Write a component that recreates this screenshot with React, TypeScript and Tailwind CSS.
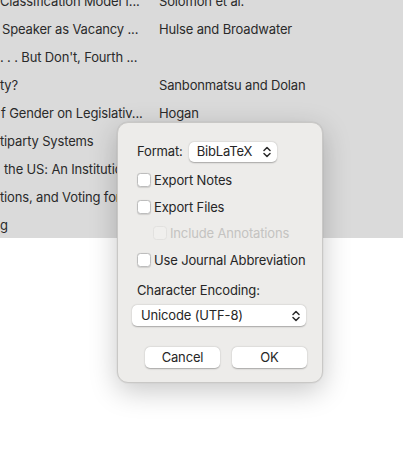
import React from 'react'

const rows = [
  { title: 'Classification Model f...', author: 'Solomon et al.', indent: 'ml-0' },
  { title: 'Speaker as Vacancy ...', author: 'Hulse and Broadwater', indent: 'ml-[2px]' },
  { title: '. . . But Don\'t, Fourth ...', author: '', indent: 'ml-0' },
  { title: 'ty?', author: 'Sanbonmatsu and Dolan', indent: 'ml-0' },
  { title: 'f Gender on Legislativ...', author: 'Hogan', indent: 'ml-[1px]' },
  { title: 'tiparty Systems', author: '', indent: 'ml-0' },
  { title: 'the US: An Institutional', author: '', indent: 'ml-[4px]' },
  { title: 'tions, and Voting for', author: '', indent: 'ml-0' },
  { title: 'g', author: '', indent: 'ml-0' },
]

const font = { fontFamily: 'Inter, "Noto Sans", sans-serif' }

function Chevrons() {
  return (
    <svg width="8" height="12" viewBox="0 0 8 12" fill="none" stroke="#2b2b2b" strokeWidth="1.5" strokeLinecap="round" strokeLinejoin="round">
      <path d="M1 4.5 L4 1.5 L7 4.5" />
      <path d="M1 7.5 L4 10.5 L7 7.5" />
    </svg>
  )
}

function Check({ label, disabled = false }: { label: string; disabled?: boolean }) {
  return (
    <div className="flex items-center gap-[3px] h-[14px]">
      <span
        className={`w-[14px] h-[14px] rounded-[3.5px] border ${
          disabled ? 'border-[#e2e1df] bg-[#f0efed]' : 'border-[#bdbdbd] bg-white shadow-[0_0.5px_1px_rgba(0,0,0,0.12)]'
        }`}
      />
      <span className={`text-[13px] leading-none ${disabled ? 'text-[#c4c3c1]' : 'text-[#262626]'}`}>{label}</span>
    </div>
  )
}

export default function App() {
  return (
    <div className="relative w-[403px] h-[464px] bg-white overflow-hidden text-[#262626] tracking-[-0.15px]" style={font}>
      {/* library list behind the sheet */}
      <div className="h-[238px] bg-[#dadada] overflow-hidden">
        <div className="-mt-[12px]">
          {rows.map((r, i) => (
            <div key={i} className="flex items-center h-[28px] text-[13px] text-[#2a2a2a]">
              <div className="w-[159px] shrink-0 whitespace-nowrap overflow-hidden">
                <span className={`inline-block ${r.indent}`}>{r.title}</span>
              </div>
              <div className="whitespace-nowrap">{r.author}</div>
            </div>
          ))}
        </div>
      </div>

      {/* export options sheet */}
      <div className="absolute left-[117px] top-[122px] w-[206px] h-[261px] rounded-[11px] bg-[#edecea] border border-[#c9c8c6] shadow-[0_8px_28px_rgba(0,0,0,0.22),0_0_0_0.5px_rgba(0,0,0,0.05)] flex flex-col">
        <div className="flex items-center mt-[18px] ml-[19px] h-[22px]">
          <span className="text-[13px]">Format:</span>
          <div className="ml-[6px] w-[88px] h-[20px] rounded-[5px] bg-white shadow-[0_0.5px_1.5px_rgba(0,0,0,0.3)] flex items-center justify-between pl-[8px] pr-[6px]">
            <span className="text-[13px]">BibLaTeX</span>
            <Chevrons />
          </div>
        </div>
        <div className="mt-[10px] ml-[19px] flex flex-col gap-[13px]">
          <Check label="Export Notes" />
          <Check label="Export Files" />
          <div className="ml-[16px] mt-[-1px]">
            <Check label="Include Annotations" disabled />
          </div>
          <div>
            <Check label="Use Journal Abbreviation" />
          </div>
        </div>
        <div className="mt-[17px] ml-[19px] text-[13px] leading-none">Character Encoding:</div>
        <div className="mt-[8px] ml-[14px] w-[174px] h-[21px] rounded-[5px] bg-white shadow-[0_0.5px_1.5px_rgba(0,0,0,0.3)] flex items-center justify-between pl-[9px] pr-[6px]">
          <span className="text-[13px]">Unicode (UTF-8)</span>
          <Chevrons />
        </div>
        <div className="mt-[21px] ml-[27px] flex gap-[12px]">
          <button className="w-[75px] h-[21px] rounded-[5px] bg-white shadow-[0_0.5px_1.5px_rgba(0,0,0,0.3)] text-[13px] leading-none">Cancel</button>
          <button className="w-[75px] h-[21px] rounded-[5px] bg-white shadow-[0_0.5px_1.5px_rgba(0,0,0,0.3)] text-[13px] leading-none">OK</button>
        </div>
      </div>
    </div>
  )
}
